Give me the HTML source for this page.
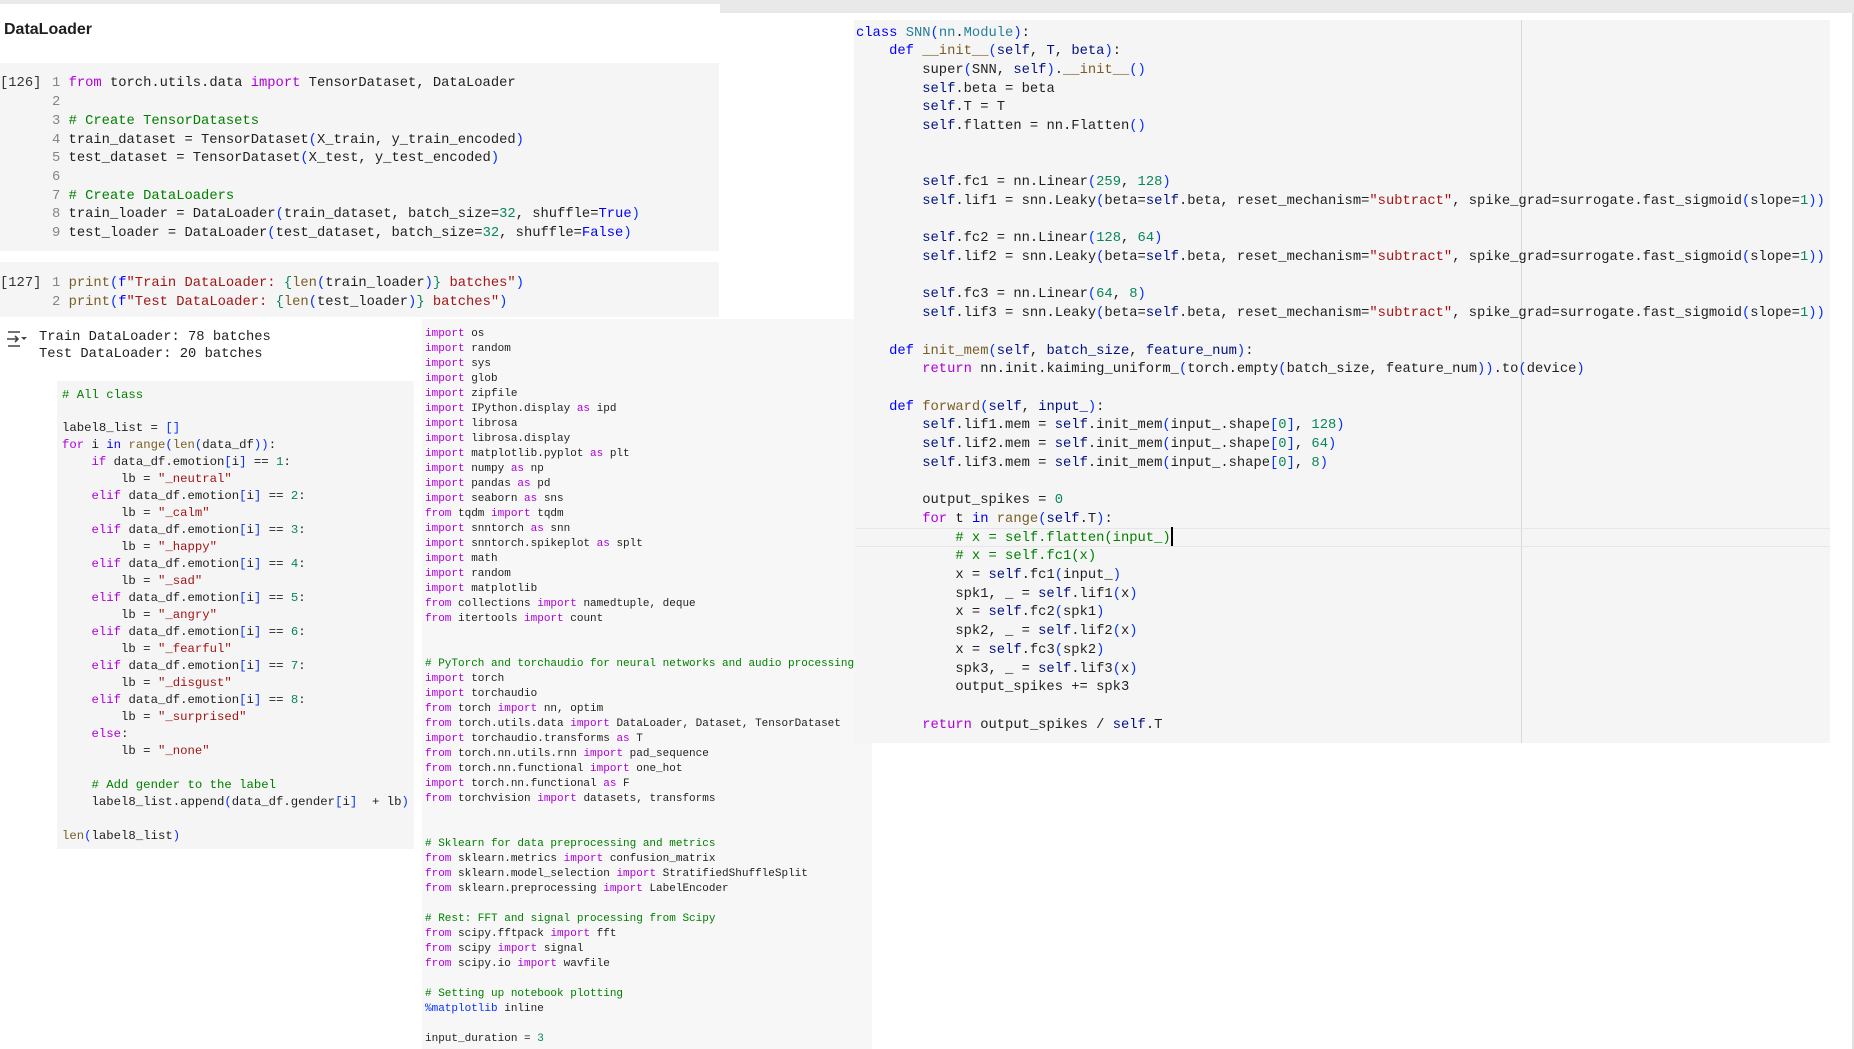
<!DOCTYPE html>
<html><head><meta charset="utf-8">
<style>
html,body{margin:0;padding:0;width:1854px;height:1049px;overflow:hidden;background:#fff;position:relative;font-family:"Liberation Mono","DejaVu Sans Mono",monospace;color:#1f1f1f}
.abs{position:absolute}
pre{margin:0;font-family:"Liberation Mono","DejaVu Sans Mono",monospace;white-space:pre}
.k{color:#af00db}.b{color:#0000ff}.f{color:#795e26}.c{color:#267f99}.n{color:#098658}.s{color:#a31515}.m{color:#008000}.p{color:#001080}.q{color:#0431fa}.ln{color:#858585}
</style></head><body>
<div class="abs" style="left:0;top:0;width:1854px;height:13px;background:#e9e9e9"></div>
<div class="abs" style="left:0;top:4px;width:720px;height:316px;background:#fff"></div>
<div class="abs" style="left:720px;top:13px;width:1130px;height:1036px;background:#fff"></div>
<div class="abs" style="left:4px;top:21px;font-family:'Liberation Sans',sans-serif;font-weight:bold;font-size:16px;color:#1f1f1f">DataLoader</div>

<div class="abs" style="left:0;top:63px;width:719px;height:188px;background:#f5f5f5"></div>
<pre class="abs" style="left:0;top:75.4px;font-size:13.8px;line-height:18.7px;color:#333">[126]</pre>
<pre class="abs" style="left:52px;top:75.4px;font-size:13.8px;line-height:18.7px"><span class="ln">1</span> <span class="k">from</span> torch.utils.data <span class="k">import</span> TensorDataset, DataLoader
<span class="ln">2</span>
<span class="ln">3</span> <span class="m"># Create TensorDatasets</span>
<span class="ln">4</span> train_dataset = TensorDataset<span class="q">(</span>X_train, y_train_encoded<span class="q">)</span>
<span class="ln">5</span> test_dataset = TensorDataset<span class="q">(</span>X_test, y_test_encoded<span class="q">)</span>
<span class="ln">6</span>
<span class="ln">7</span> <span class="m"># Create DataLoaders</span>
<span class="ln">8</span> train_loader = DataLoader<span class="q">(</span>train_dataset, batch_size=<span class="n">32</span>, shuffle=<span class="b">True</span><span class="q">)</span>
<span class="ln">9</span> test_loader = DataLoader<span class="q">(</span>test_dataset, batch_size=<span class="n">32</span>, shuffle=<span class="b">False</span><span class="q">)</span></pre>

<div class="abs" style="left:0;top:262px;width:719px;height:55px;background:#f5f5f5"></div>
<pre class="abs" style="left:0;top:274.8px;font-size:13.8px;line-height:18.7px;color:#333">[127]</pre>
<pre class="abs" style="left:52px;top:274.8px;font-size:13.8px;line-height:18.7px"><span class="ln">1</span> <span class="f">print</span><span class="q">(</span><span class="b">f</span><span class="s">"Train DataLoader: </span><span class="n">{</span><span class="f">len</span><span class="q">(</span>train_loader<span class="q">)</span><span class="n">}</span><span class="s"> batches"</span><span class="q">)</span>
<span class="ln">2</span> <span class="f">print</span><span class="q">(</span><span class="b">f</span><span class="s">"Test DataLoader: </span><span class="n">{</span><span class="f">len</span><span class="q">(</span>test_loader<span class="q">)</span><span class="n">}</span><span class="s"> batches"</span><span class="q">)</span></pre>

<svg class="abs" style="left:5px;top:329px" width="24" height="20" viewBox="0 0 24 20"><path d="M3 3H15M3 17H15M2 10H13M10 7L13 10L10 13" stroke="#444" stroke-width="1.6" fill="none"/><path d="M16 8H22L19 11Z" fill="#444"/></svg>
<pre class="abs" style="left:39px;top:330px;font-size:13.8px;line-height:16.6px;color:#1f1f1f">Train DataLoader: 78 batches
Test DataLoader: 20 batches</pre>

<div class="abs" style="left:57px;top:381px;width:357px;height:468px;background:#f5f5f5"></div>
<pre class="abs" style="left:62px;top:386.5px;font-size:12.3px;line-height:16.97px"><span class="m"># All class</span>

label8_list = <span class="q">[]</span>
<span class="k">for</span> i <span class="b">in</span> <span class="f">range</span><span class="q">(</span><span class="f">len</span><span class="q">(</span>data_df<span class="q">))</span>:
    <span class="k">if</span> data_df.emotion<span class="q">[</span>i<span class="q">]</span> == <span class="n">1</span>:
        lb = <span class="s">"_neutral"</span>
    <span class="k">elif</span> data_df.emotion<span class="q">[</span>i<span class="q">]</span> == <span class="n">2</span>:
        lb = <span class="s">"_calm"</span>
    <span class="k">elif</span> data_df.emotion<span class="q">[</span>i<span class="q">]</span> == <span class="n">3</span>:
        lb = <span class="s">"_happy"</span>
    <span class="k">elif</span> data_df.emotion<span class="q">[</span>i<span class="q">]</span> == <span class="n">4</span>:
        lb = <span class="s">"_sad"</span>
    <span class="k">elif</span> data_df.emotion<span class="q">[</span>i<span class="q">]</span> == <span class="n">5</span>:
        lb = <span class="s">"_angry"</span>
    <span class="k">elif</span> data_df.emotion<span class="q">[</span>i<span class="q">]</span> == <span class="n">6</span>:
        lb = <span class="s">"_fearful"</span>
    <span class="k">elif</span> data_df.emotion<span class="q">[</span>i<span class="q">]</span> == <span class="n">7</span>:
        lb = <span class="s">"_disgust"</span>
    <span class="k">elif</span> data_df.emotion<span class="q">[</span>i<span class="q">]</span> == <span class="n">8</span>:
        lb = <span class="s">"_surprised"</span>
    <span class="k">else</span>:
        lb = <span class="s">"_none"</span>

    <span class="m"># Add gender to the label</span>
    label8_list.append<span class="q">(</span>data_df.gender<span class="q">[</span>i<span class="q">]</span>  + lb<span class="q">)</span>

<span class="f">len</span><span class="q">(</span>label8_list<span class="q">)</span></pre>

<div class="abs" style="left:422px;top:319px;width:450px;height:730px;background:#f7f7f7"></div>
<pre class="abs" style="left:425px;top:326.8px;font-size:11px;line-height:15px"><span class="k">import</span> os
<span class="k">import</span> random
<span class="k">import</span> sys
<span class="k">import</span> glob
<span class="k">import</span> zipfile
<span class="k">import</span> IPython.display <span class="k">as</span> ipd
<span class="k">import</span> librosa
<span class="k">import</span> librosa.display
<span class="k">import</span> matplotlib.pyplot <span class="k">as</span> plt
<span class="k">import</span> numpy <span class="k">as</span> np
<span class="k">import</span> pandas <span class="k">as</span> pd
<span class="k">import</span> seaborn <span class="k">as</span> sns
<span class="k">from</span> tqdm <span class="k">import</span> tqdm
<span class="k">import</span> snntorch <span class="k">as</span> snn
<span class="k">import</span> snntorch.spikeplot <span class="k">as</span> splt
<span class="k">import</span> math
<span class="k">import</span> random
<span class="k">import</span> matplotlib
<span class="k">from</span> collections <span class="k">import</span> namedtuple, deque
<span class="k">from</span> itertools <span class="k">import</span> count


<span class="m"># PyTorch and torchaudio for neural networks and audio processing</span>
<span class="k">import</span> torch
<span class="k">import</span> torchaudio
<span class="k">from</span> torch <span class="k">import</span> nn, optim
<span class="k">from</span> torch.utils.data <span class="k">import</span> DataLoader, Dataset, TensorDataset
<span class="k">import</span> torchaudio.transforms <span class="k">as</span> T
<span class="k">from</span> torch.nn.utils.rnn <span class="k">import</span> pad_sequence
<span class="k">from</span> torch.nn.functional <span class="k">import</span> one_hot
<span class="k">import</span> torch.nn.functional <span class="k">as</span> F
<span class="k">from</span> torchvision <span class="k">import</span> datasets, transforms


<span class="m"># Sklearn for data preprocessing and metrics</span>
<span class="k">from</span> sklearn.metrics <span class="k">import</span> confusion_matrix
<span class="k">from</span> sklearn.model_selection <span class="k">import</span> StratifiedShuffleSplit
<span class="k">from</span> sklearn.preprocessing <span class="k">import</span> LabelEncoder

<span class="m"># Rest: FFT and signal processing from Scipy</span>
<span class="k">from</span> scipy.fftpack <span class="k">import</span> fft
<span class="k">from</span> scipy <span class="k">import</span> signal
<span class="k">from</span> scipy.io <span class="k">import</span> wavfile

<span class="m"># Setting up notebook plotting</span>
<span class="q">%matplotlib</span> inline

input_duration = <span class="n">3</span></pre>

<div class="abs" style="left:854px;top:20px;width:976px;height:723px;background:#f5f5f5"></div>
<div class="abs" style="left:1521px;top:20px;width:1px;height:723px;background:#d8d8d8"></div>
<div class="abs" style="left:856px;top:528px;width:974px;height:17px;border-top:1px solid #e6e6e6;border-bottom:1px solid #e6e6e6"></div>
<div class="abs" style="left:1171px;top:527px;width:2px;height:19px;background:#000"></div>
<pre class="abs" style="left:856px;top:24.6px;font-size:13.8px;line-height:18.7px"><span class="b">class</span> <span class="c">SNN</span><span class="q">(</span><span class="c">nn</span>.<span class="c">Module</span><span class="q">)</span>:
    <span class="b">def</span> <span class="f">__init__</span><span class="q">(</span><span class="p">self</span>, <span class="p">T</span>, <span class="p">beta</span><span class="q">)</span>:
        super<span class="q">(</span>SNN, <span class="p">self</span><span class="q">)</span>.<span class="f">__init__</span><span class="q">()</span>
        <span class="p">self</span>.beta = beta
        <span class="p">self</span>.T = T
        <span class="p">self</span>.flatten = nn.Flatten<span class="q">()</span>


        <span class="p">self</span>.fc1 = nn.Linear<span class="q">(</span><span class="n">259</span>, <span class="n">128</span><span class="q">)</span>
        <span class="p">self</span>.lif1 = snn.Leaky<span class="q">(</span>beta=<span class="p">self</span>.beta, reset_mechanism=<span class="s">"subtract"</span>, spike_grad=surrogate.fast_sigmoid<span class="q">(</span>slope=<span class="n">1</span><span class="q">))</span>

        <span class="p">self</span>.fc2 = nn.Linear<span class="q">(</span><span class="n">128</span>, <span class="n">64</span><span class="q">)</span>
        <span class="p">self</span>.lif2 = snn.Leaky<span class="q">(</span>beta=<span class="p">self</span>.beta, reset_mechanism=<span class="s">"subtract"</span>, spike_grad=surrogate.fast_sigmoid<span class="q">(</span>slope=<span class="n">1</span><span class="q">))</span>

        <span class="p">self</span>.fc3 = nn.Linear<span class="q">(</span><span class="n">64</span>, <span class="n">8</span><span class="q">)</span>
        <span class="p">self</span>.lif3 = snn.Leaky<span class="q">(</span>beta=<span class="p">self</span>.beta, reset_mechanism=<span class="s">"subtract"</span>, spike_grad=surrogate.fast_sigmoid<span class="q">(</span>slope=<span class="n">1</span><span class="q">))</span>

    <span class="b">def</span> <span class="f">init_mem</span><span class="q">(</span><span class="p">self</span>, <span class="p">batch_size</span>, <span class="p">feature_num</span><span class="q">)</span>:
        <span class="k">return</span> nn.init.kaiming_uniform_<span class="q">(</span>torch.empty<span class="q">(</span>batch_size, feature_num<span class="q">))</span>.to<span class="q">(</span>device<span class="q">)</span>

    <span class="b">def</span> <span class="f">forward</span><span class="q">(</span><span class="p">self</span>, <span class="p">input_</span><span class="q">)</span>:
        <span class="p">self</span>.lif1.mem = <span class="p">self</span>.init_mem<span class="q">(</span>input_.shape<span class="q">[</span><span class="n">0</span><span class="q">]</span>, <span class="n">128</span><span class="q">)</span>
        <span class="p">self</span>.lif2.mem = <span class="p">self</span>.init_mem<span class="q">(</span>input_.shape<span class="q">[</span><span class="n">0</span><span class="q">]</span>, <span class="n">64</span><span class="q">)</span>
        <span class="p">self</span>.lif3.mem = <span class="p">self</span>.init_mem<span class="q">(</span>input_.shape<span class="q">[</span><span class="n">0</span><span class="q">]</span>, <span class="n">8</span><span class="q">)</span>

        output_spikes = <span class="n">0</span>
        <span class="k">for</span> t <span class="b">in</span> <span class="f">range</span><span class="q">(</span><span class="p">self</span>.T<span class="q">)</span>:
            <span class="m"># x = self.flatten(input_)</span>
            <span class="m"># x = self.fc1(x)</span>
            x = <span class="p">self</span>.fc1<span class="q">(</span>input_<span class="q">)</span>
            spk1, _ = <span class="p">self</span>.lif1<span class="q">(</span>x<span class="q">)</span>
            x = <span class="p">self</span>.fc2<span class="q">(</span>spk1<span class="q">)</span>
            spk2, _ = <span class="p">self</span>.lif2<span class="q">(</span>x<span class="q">)</span>
            x = <span class="p">self</span>.fc3<span class="q">(</span>spk2<span class="q">)</span>
            spk3, _ = <span class="p">self</span>.lif3<span class="q">(</span>x<span class="q">)</span>
            output_spikes += spk3

        <span class="k">return</span> output_spikes / <span class="p">self</span>.T</pre>
<div class="abs" style="left:1852px;top:13px;width:2px;height:1036px;background:#e0e0e0"></div>
</body></html>
